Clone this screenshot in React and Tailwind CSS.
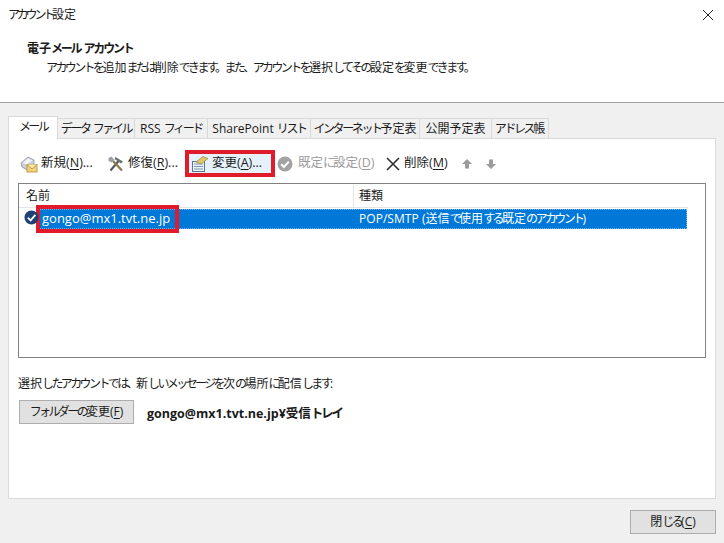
const font = "font-['Segoe_UI','Open_Sans','Noto_Sans_CJK_JP',sans-serif]"

const tabs = [
  { label: 'データ ファイル', w: 'w-[77px]' },
  { label: 'RSS フィード', w: 'w-[73px]' },
  { label: 'SharePoint リスト', w: 'w-[103px]' },
  { label: 'インターネット予定表', w: 'w-[109px]' },
  { label: '公開予定表', w: 'w-[72px]' },
  { label: 'アドレス帳', w: 'w-[57px]' },
]

// kana is much narrower than kanji in the original UI font
function J({ text, kana = 'tracking-[-2.6px]' }) {
  return text.split(/([\u3040-\u30ff。、]+)/).map((part, i) =>
    i % 2 ? <span key={i} className={kana}>{part}</span> : part
  )
}

function Key({ k }) {
  return <>(<span className="underline underline-offset-2">{k}</span>)</>
}

function NewIcon() {
  return (
    <svg width="18" height="18" viewBox="0 0 18 18">
      <path d="M1 8 L8 2 L14 5 L14 10 L7 15 L2 12 Z" fill="#c9ced3" stroke="#8f979e" strokeWidth="0.8" />
      <path d="M2.5 8 L8 3.2 L12.5 5.5 L7 9.5 Z" fill="#f1f3f4" />
      <rect x="7" y="9.5" width="10" height="7.5" fill="#f3d27a" stroke="#b08a35" strokeWidth="0.8" />
      <path d="M7 9.5 L12 14 L17 9.5" fill="#fbe9ad" stroke="#b08a35" strokeWidth="0.8" />
    </svg>
  )
}

function RepairIcon() {
  return (
    <svg width="18" height="18" viewBox="0 0 18 18">
      <path d="M3.5 15.5 L11.5 6" stroke="#55595d" strokeWidth="2.2" />
      <path d="M8.5 2 L16 6.5 L14 8.5 L7.5 4 Z" fill="#6b7176" />
      <path d="M15 15.5 L6 6" stroke="#8a7a4a" strokeWidth="2.2" />
      <path d="M1.5 3 L4.5 1.5 L7.5 5 L5 7.5 L1.5 6 Z" fill="#9aa0a5" />
    </svg>
  )
}

function ChangeIcon() {
  return (
    <svg width="18" height="18" viewBox="0 0 18 18">
      <rect x="1.5" y="6.5" width="12" height="10" fill="#eef3f8" stroke="#59748f" />
      <path d="M3 9 H12 M3 11.5 H12 M3 14 H12" stroke="#7c95ad" />
      <path d="M5 7 L12 1.5 L17 3.5 L10 9 Z" fill="#e3c66c" stroke="#9a8238" strokeWidth="0.7" />
    </svg>
  )
}

function DefaultIcon() {
  return (
    <svg width="16" height="16" viewBox="0 0 16 16">
      <circle cx="8" cy="8" r="7.5" fill="#a3a3a3" />
      <path d="M4.2 8.2 L7 11 L11.8 5.6" fill="none" stroke="#fff" strokeWidth="2" />
    </svg>
  )
}

function DeleteIcon() {
  return (
    <svg width="14" height="14" viewBox="0 0 14 14">
      <path d="M1 1 L13 13 M13 1 L1 13" stroke="#2f2f2f" strokeWidth="1.6" />
    </svg>
  )
}

function Arrow({ down }) {
  return (
    <svg width="12" height="12" viewBox="0 0 12 12">
      <path d={down ? 'M4 1.5 H8 V6 H11 L6 11 L1 6 H4 Z' : 'M6 1 L11 6 H8 V10.5 H4 V6 H1 Z'} fill="#9b9b9b" />
    </svg>
  )
}

function AccountIcon() {
  return (
    <svg width="15" height="15" viewBox="0 0 15 15">
      <circle cx="7.5" cy="7.5" r="7" fill="#1d3f73" />
      <path d="M3.8 7.6 L6.6 10.4 L11.4 4.8" fill="none" stroke="#fff" strokeWidth="1.8" />
    </svg>
  )
}

export default function App() {
  return (
    <div className={`${font} flex h-[543px] w-[724px] flex-col overflow-hidden bg-[#f0f0f0] text-[12px] text-[#1a1a1a]`}>
      <div className="h-[103px] shrink-0 border-b border-[#a0a0a0] bg-white">
        <div className="flex h-[29px] items-center justify-between pl-[8px] pr-[10px]">
          <span><J text="アカウント設定" kana="tracking-[-3.2px]" /></span>
          <svg width="12" height="12" viewBox="0 0 12 12">
            <path d="M1 1 L11 11 M11 1 L1 11" stroke="#222" strokeWidth="1" />
          </svg>
        </div>
        <div className="pl-[27px] pt-[11px] font-bold leading-[18px]">
          <J text="電子メール アカウント" kana="tracking-[-2.2px]" />
        </div>
        <div className="pl-[46px] pt-[1px] leading-[18px]">
          <J text="アカウントを追加または削除できます。また、アカウントを選択してその設定を変更できます。" />
        </div>
      </div>

      <div className="flex h-[35px] shrink-0 items-end pl-[8px]">
        <div className="relative z-10 -mb-px flex h-[23px] w-[50px] items-center justify-center border border-b-0 border-[#d9d9d9] bg-white pb-[2px]">
          <J text="メール" />
        </div>
        {tabs.map(t => (
          <div key={t.label} className={`flex h-[20px] items-center justify-center border-r border-t border-[#d9d9d9] bg-[#f0f0f0] pt-[1px] whitespace-nowrap ${t.w}`}>
            <span><J text={t.label} kana="tracking-[-2.4px]" /></span>
          </div>
        ))}
      </div>

      <div className="mx-[8px] flex h-[361px] shrink-0 flex-col border border-[#d9d9d9] bg-white px-[9px]">
        <div className="flex h-[44px] shrink-0 items-center pt-[5px] text-[12.5px]">
          <div className="ml-[2px] flex w-[87px] items-center gap-[3px]">
            <NewIcon />
            <span>新規<Key k="N" />...</span>
          </div>
          <div className="flex w-[78px] items-center gap-[3px]">
            <RepairIcon />
            <span>修復<Key k="R" />...</span>
          </div>
          <div className="flex h-[27px] w-[90px] items-center gap-[3px] border-[4px] border-[#e01b2b] bg-[#e5f1fb] pl-[2px]">
            <ChangeIcon />
            <span>変更<Key k="A" />...</span>
          </div>
          <div className="ml-[2px] flex w-[109px] items-center gap-[5px] text-[#9a9a9a]">
            <DefaultIcon />
            <span>既定<J text="に" />設定<Key k="D" /></span>
          </div>
          <div className="flex w-[75px] items-center gap-[4px]">
            <DeleteIcon />
            <span>削除<Key k="M" /></span>
          </div>
          <Arrow />
          <div className="ml-[12px]"><Arrow down /></div>
        </div>

        <div className="relative h-[175px] shrink-0 border border-[#828282] bg-white">
          <div className="flex h-[24px] w-[669px] items-center border-b border-[#e5e5e5] pt-[1px]">
            <div className="flex h-full w-[335px] items-center border-r border-[#e5e5e5] pl-[7px]">名前</div>
            <div className="pl-[5px]">種類</div>
          </div>
          <div className="mt-[1px] flex h-[20px] w-[668px] items-center">
            <div className="h-full w-[20px] shrink-0" />
            <div className="flex h-full flex-1 items-center border border-dotted border-[#7fb4e6] bg-[#0078d7] text-white">
              <div className="w-[314px] pl-[2px] text-[13px]">gongo@mx1.tvt.ne.jp</div>
              <div className="whitespace-nowrap pl-[5px] tracking-[0.05px]">
                <J text="POP/SMTP (送信で使用する既定のアカウント)" />
              </div>
            </div>
          </div>
          {/* marker box and status icon sit over the selected row */}
          <div className="absolute left-[17px] top-[21px] h-[28px] w-[143px] border-[4px] border-[#e01b2b]" />
          <div className="absolute left-[5px] top-[26px]"><AccountIcon /></div>
        </div>

        <div className="pt-[17px] leading-[18px]">
          <J text="選択したアカウントでは、新しいメッセージを次の場所に配信します:" />
        </div>
        <div className="mt-[7px] flex items-start">
          <div className="ml-[1px] flex h-[24px] w-[115px] items-center justify-center border border-[#adadad] bg-[#e1e1e1]">
            <span><J text="フォルダーの変更" /><Key k="F" /></span>
          </div>
          <div className="ml-[13px] pt-[5px] text-[12.5px] font-bold">
            <J text="gongo@mx1.tvt.ne.jp¥受信トレイ" kana="tracking-[-2.2px]" />
          </div>
        </div>
      </div>

      <div className="flex flex-1 items-start justify-end pr-[8px] pt-[11px]">
        <div className="flex h-[24px] w-[86px] items-center justify-center border border-[#adadad] bg-[#e1e1e1]">
          <span>閉<J text="じる" /><Key k="C" /></span>
        </div>
      </div>
    </div>
  )
}
